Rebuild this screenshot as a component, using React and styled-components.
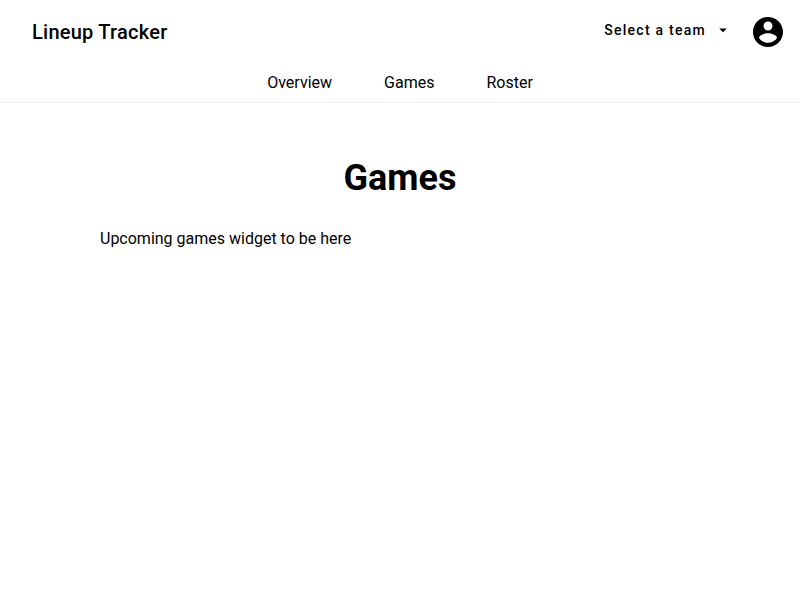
import React from 'react';
import styled, { createGlobalStyle } from 'styled-components';

const GlobalStyle = createGlobalStyle`
  body {
    margin: 0;
    background: #fff;
    color: #000;
    font: 400 16px/19px Roboto, sans-serif;
  }
`;

const Header = styled.header`
  height: 102px;
  border-bottom: 1px solid #eee;
`;

const Toolbar = styled.div`
  display: flex;
  align-items: center;
  height: 64px;
  padding: 0 16px 0 32px;
  box-sizing: border-box;
`;

const Brand = styled.div`
  flex: 1;
  font-size: 20px;
  font-weight: 500;
  letter-spacing: 0.25px;
  line-height: 32px;
`;

const TeamButton = styled.button`
  display: flex;
  align-items: center;
  height: 36px;
  margin: 0 18px 4px 0;
  padding: 0;
  border: 0;
  background: none;
  color: inherit;
  font: 500 14px/36px Roboto, sans-serif;
  letter-spacing: 1.25px;

  svg {
    margin-left: 8px;
  }
`;

const AccountButton = styled.button`
  display: flex;
  padding: 0;
  margin-right: -2px;
  border: 0;
  background: none;
  color: inherit;
`;

const Nav = styled.nav`
  display: flex;
  justify-content: center;
  gap: 52px;
  padding-top: 9px;
`;

const NavLink = styled.a`
  color: inherit;
  text-decoration: none;
`;

const Main = styled.main`
  width: 600px;
  margin: 0 auto;
  padding-top: 54px;
`;

const Title = styled.h1`
  margin: 0 0 30px;
  font-size: 36px;
  font-weight: 700;
  line-height: 42px;
  text-align: center;
`;

const Message = styled.p`
  margin: 0;
`;

const tabs = ['Overview', 'Games', 'Roster'];

export default function App() {
  return (
    <>
      <GlobalStyle />
      <Header>
        <Toolbar>
          <Brand>Lineup Tracker</Brand>
          <TeamButton>
            Select a team
            <svg width="18" height="18" viewBox="0 0 24 24" fill="currentColor">
              <path d="M7 10l5 5 5-5z" />
            </svg>
          </TeamButton>
          <AccountButton aria-label="Account">
            <svg width="36" height="36" viewBox="0 0 24 24" fill="currentColor">
              <path d="M12 2C6.48 2 2 6.48 2 12s4.48 10 10 10 10-4.48 10-10S17.52 2 12 2zm0 3c1.66 0 3 1.34 3 3s-1.34 3-3 3-3-1.34-3-3 1.34-3 3-3zm0 14.2c-2.5 0-4.71-1.28-6-3.22.03-1.99 4-3.08 6-3.08 1.99 0 5.97 1.09 6 3.08-1.29 1.94-3.5 3.22-6 3.22z" />
            </svg>
          </AccountButton>
        </Toolbar>
        <Nav>
          {tabs.map((tab) => (
            <NavLink key={tab}>{tab}</NavLink>
          ))}
        </Nav>
      </Header>
      <Main>
        <Title>Games</Title>
        <Message>Upcoming games widget to be here</Message>
      </Main>
    </>
  );
}
